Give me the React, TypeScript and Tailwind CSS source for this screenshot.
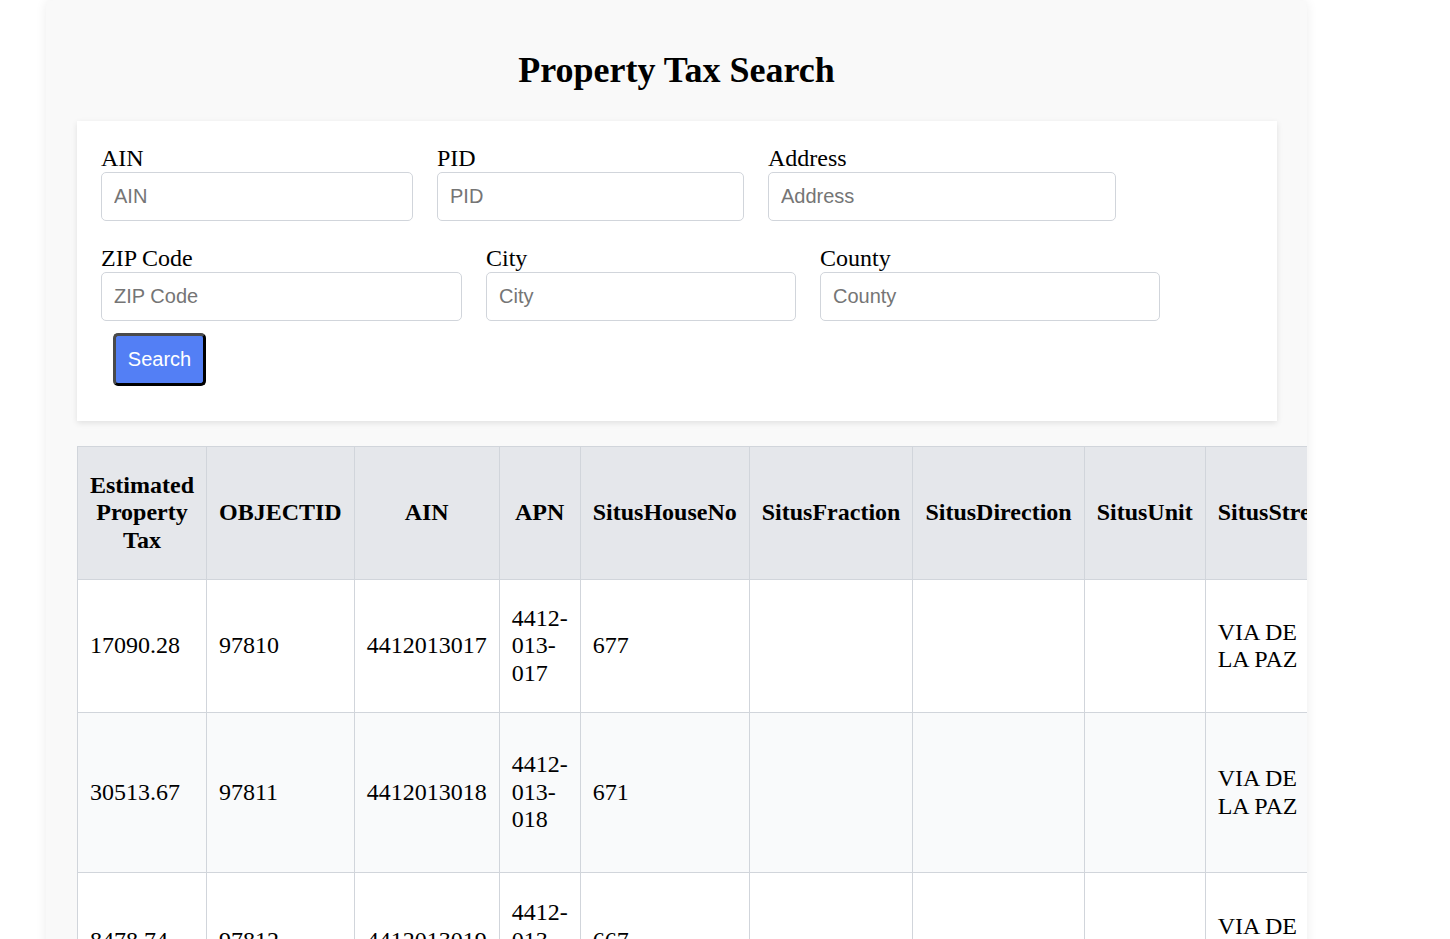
import React from "react";

const row1 = [
    { label: "AIN", w: "w-[312px]" },
    { label: "PID", w: "w-[307px]" },
    { label: "Address", w: "w-[348px]" },
];

const row2 = [
    { label: "ZIP Code", w: "w-[361px]" },
    { label: "City", w: "w-[310px]" },
    { label: "County", w: "w-[340px]" },
];

const columns = [
    { name: "Estimated Property Tax", w: "w-[129px]" },
    { name: "OBJECTID", w: "w-[146px]" },
    { name: "AIN", w: "w-[145px]" },
    { name: "APN", w: "w-[81px]" },
    { name: "SitusHouseNo", w: "w-[169px]" },
    { name: "SitusFraction", w: "w-[164px]" },
    { name: "SitusDirection", w: "w-[171px]" },
    { name: "SitusUnit", w: "w-[121px]" },
    { name: "SitusStreet", w: "w-[150px]" },
];

const rows = [
    { h: "h-[133px]", cells: ["17090.28", "97810", "4412013017", "4412-013-017", "677", "", "", "", "VIA DE LA PAZ"] },
    { h: "h-[160px]", cells: ["30513.67", "97811", "4412013018", "4412-013-018", "671", "", "", "", "VIA DE LA PAZ"] },
    { h: "h-[136px]", cells: ["8478.74", "97812", "4412013019", "4412-013-019", "667", "", "", "", "VIA DE LA PAZ"] },
];

function Field({ label, w }: { label: string; w: string }) {
    return (
        <div className={`flex flex-col ${w}`}>
            <label className="text-[24px] leading-[27px] text-black">{label}</label>
            <input
                placeholder={label}
                className="h-[49px] w-full rounded-[5px] border border-[#d1d5db] bg-white px-3 font-['Liberation_Sans',Arial,sans-serif] text-[20px] text-black placeholder:text-[#757575] outline-none"
            />
        </div>
    );
}

export default function App() {
    return (
        <div className="min-h-[939px] bg-white font-['Liberation_Serif','Times_New_Roman',serif] text-black">
            <div className="ml-[46px] w-[1261px] min-h-[939px] overflow-hidden rounded-t-lg bg-[#f9f9f9] px-[31px] pt-[50px] shadow-[0_0_12px_rgba(0,0,0,0.08)]">
                <h1 className="mb-[30px] text-center text-[36px] font-bold leading-[41px]">Property Tax Search</h1>

                {/* Search form */}
                <div className="w-[1200px] bg-white p-6 shadow-[0_2px_6px_rgba(0,0,0,0.1)]">
                    <div className="flex flex-col gap-6">
                        <div className="flex gap-6">
                            {row1.map((f) => (
                                <Field key={f.label} {...f} />
                            ))}
                        </div>
                        <div className="flex gap-6">
                            {row2.map((f) => (
                                <Field key={f.label} {...f} />
                            ))}
                        </div>
                    </div>
                    <button className="m-3 mb-[11px] h-[53px] w-[93px] rounded-[5px] border-[3px] border-[#4a4a4a] border-b-black border-r-black bg-[#537ff5] pb-[2px] font-['Liberation_Sans',Arial,sans-serif] text-[20px] text-white">
                        Search
                    </button>
                </div>

                {/* Results */}
                <table className="mt-[25px] table-fixed border-collapse text-[24px] leading-[27.5px]">
                    <colgroup>
                        {columns.map((c) => (
                            <col key={c.name} className={c.w} />
                        ))}
                    </colgroup>
                    <thead>
                        <tr className="h-[133px] bg-[#e5e7eb]">
                            {columns.map((c) => (
                                <th key={c.name} className="border border-[#d1d5db] px-3 py-6 text-center align-middle font-bold">
                                    {c.name}
                                </th>
                            ))}
                        </tr>
                    </thead>
                    <tbody>
                        {rows.map((r, i) => (
                            <tr key={i} className={`${r.h} ${i % 2 === 1 ? "bg-[#f9fafb]" : "bg-white"}`}>
                                {r.cells.map((v, j) => (
                                    <td key={j} className="border border-[#d1d5db] px-3 py-6 text-left align-middle">
                                        {v}
                                    </td>
                                ))}
                            </tr>
                        ))}
                    </tbody>
                </table>
            </div>
        </div>
    );
}
